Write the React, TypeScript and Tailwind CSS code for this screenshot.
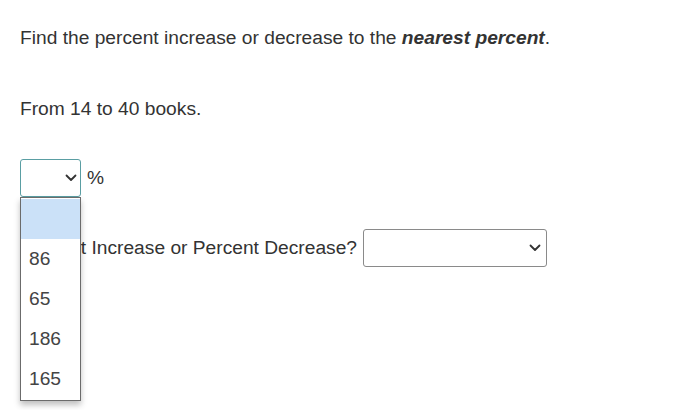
import React from "react";

const options = ["86", "65", "186", "165"];

const Chevron = () => (
  <svg width="12" height="8" viewBox="0 0 12 8" fill="none" className="shrink-0">
    <path d="M1.5 1.5L6 6L10.5 1.5" stroke="#333" strokeWidth="1.8" strokeLinecap="round" strokeLinejoin="round" />
  </svg>
);

export default function App() {
  return (
    <div className="w-[675px] h-[410px] bg-white px-5 text-[19.2px] text-[#333] overflow-hidden" style={{ fontFamily: '"Liberation Sans", Arial, sans-serif' }}>
      <p className="pt-[27px] leading-[22px]">
        Find the percent increase or decrease to the <strong className="italic font-bold">nearest percent</strong>.
      </p>
      <p className="mt-[49px] leading-[22px]">From 14 to 40 books.</p>

      <div className="mt-[39px] flex items-center gap-[6px]">
        <div className="relative">
          <div className="w-[61px] h-[38px] border border-[#5a9ea3] rounded-[3px] flex items-center justify-end pr-[3px]">
            <Chevron />
          </div>
          <div className="absolute left-0 top-[38px] w-[61px] z-10 bg-white border border-[#6b6b6b] shadow-[0_4px_6px_rgba(0,0,0,0.25)] pt-[1px] pb-[1px] text-[#444]">
            <div className="h-[40px] bg-[#cbe1f8]"></div>
            {options.map((o) => (
              <div key={o} className="h-[40px] flex items-center pl-[8px] pt-[1px]">
                {o}
              </div>
            ))}
          </div>
        </div>
        <span>%</span>
      </div>

      <div className="mt-[32px] flex items-center gap-[6px]">
        <span>Percent Increase or Percent Decrease?</span>
        <div className="w-[184px] h-[38px] border border-[#8a8a8a] rounded-[3px] flex items-center justify-end pr-[5px]">
          <Chevron />
        </div>
      </div>
    </div>
  );
}
